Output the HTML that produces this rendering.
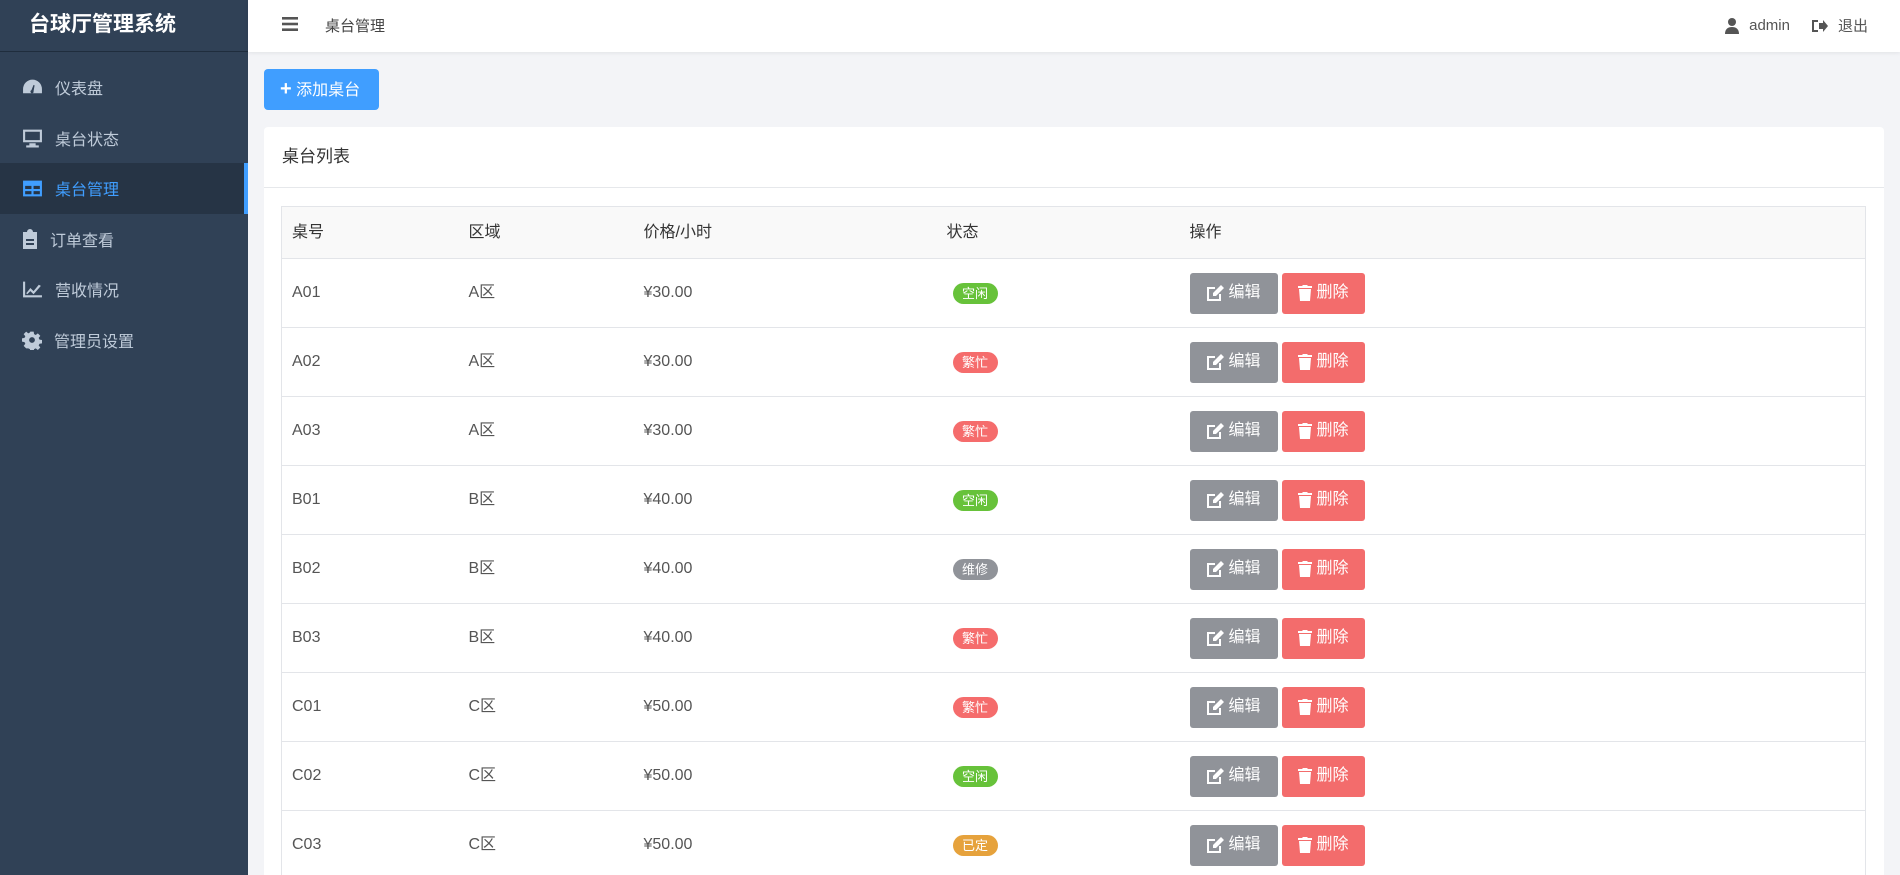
<!DOCTYPE html>
<html><head><meta charset="utf-8"><style>
*{box-sizing:border-box;margin:0;padding:0}
html{width:1900px;height:875px;overflow:hidden;background:#f3f4f7}
body{width:1900px;height:875px;overflow:hidden;font-family:"Liberation Sans","Noto Sans CJK SC",sans-serif;background:#f3f4f7;color:#333;position:relative}
.side{position:absolute;left:0;top:0;width:248px;height:875px;background:#304156}
.logo{height:52px;border-bottom:1px solid #1f2d3d;color:#fff;font-weight:bold;font-size:21px;line-height:50px;padding-left:29px}
.menu{margin-top:10px}
.mi{height:50.5px;display:flex;align-items:center;padding-left:22px;color:#bfcbd9;font-size:16px}
.mi svg{width:21px;height:20px;margin-right:12px;fill:#bfcbd9}
.mi.act{background:#263445;color:#409eff;border-right:4px solid #409eff}
.mi.act svg{fill:#409eff}
.top{position:absolute;left:248px;top:0;right:0;height:52px;background:#fff;box-shadow:0 1px 4px rgba(0,21,41,.08)}
.top .t{position:absolute;left:77px;top:15px;font-size:15px;color:#444}
.ham{position:absolute;left:34px;top:17px}
.tr{position:absolute;right:32px;top:15px;font-size:15px;color:#555;display:flex;align-items:center}
.btn{position:absolute;left:264px;top:69px;width:115px;height:41px;background:#409eff;border-radius:4px;color:#fff;font-size:16px;line-height:41px;padding-left:16px}
.card{position:absolute;left:264px;top:127px;width:1620px;height:760px;background:#fff;border-radius:4px}
.ch{height:61px;border-bottom:1px solid #e6e8eb;font-size:17px;line-height:60px;padding-left:18px}
table{position:absolute;left:17px;top:79px;width:1585px;border-collapse:collapse;font-size:16px;border-left:1px solid #e3e5e9;border-right:1px solid #e3e5e9}
td,th{border-top:1px solid #e3e5e9;text-align:left;font-weight:normal;padding-left:10px;vertical-align:middle;line-height:20px}
th{height:52px;background:#f9f9f9}
td{height:69px;color:#555}
.b{display:inline-block;width:45px;height:21px;border-radius:11px;color:#fff;font-size:13px;line-height:21px;text-align:center;margin-left:6px;vertical-align:middle}
.g{background:#67c23a}.r{background:#f56c6c}.y{background:#909399}.o{background:#e6a23c}
.e,.d{display:inline-flex;align-items:center;height:41px;border-radius:3px;color:#fff;font-size:16px;vertical-align:middle}
.e{width:88px;background:#909399;padding-left:17px}
.d{width:83px;background:#f36c6c;margin-left:4px;padding-left:16px}
.e svg,.d svg{margin-right:5px;fill:#fff}
</style></head><body>
<div class="side"><div class="logo">台球厅管理系统</div>
<div class="menu">
<div class="mi"><svg viewBox="0 0 20 18"><path d="M10 2A9 9 0 0 0 1 11v4h18v-4A9 9 0 0 0 10 2zm1 11a1.5 1.5 0 1 1-2-1l2-5 1 .5-1 5.5z"/></svg>仪表盘</div>
<div class="mi"><svg viewBox="0 0 20 18"><path d="M1 1h18v12H1zM3 3v8h14V3zM7 14h6v2h3v2H4v-2h3z"/></svg>桌台状态</div>
<div class="mi act"><svg viewBox="0 0 20 18"><path d="M1 2h18v15H1zM3 7v3h6V7zm8 0v3h6V7zM3 12v3h6v-3zm8 0v3h6v-3z"/></svg>桌台管理</div>
<div class="mi"><svg viewBox="0 0 16 20" style="width:16px;height:20px"><path d="M1 3h4a3 3 0 0 1 6 0h4v17H1zm3 7v2h8v-2zm0 4v2h8v-2z"/></svg>订单查看</div>
<div class="mi"><svg viewBox="0 0 20 18"><path d="M1 2h2v13h16v2H1zm3 11l4-5 3 3 5-6 2 1-7 8-3-3-3 3z"/></svg>营收情况</div>
<div class="mi"><svg viewBox="-2 -2 24 24" style="width:20px"><path d="M8 0h4l.5 3 2 1 2.5-2 3 3-2 2.5 1 2 3 .5v4l-3 .5-1 2 2 2.5-3 3-2.5-2-2 1-.5 3H8l-.5-3-2-1L3 20 0 17l2-2.5-1-2L-2 12V8l3-.5 1-2L0 3l3-3 2.5 2 2-1zm2 6.5a3.5 3.5 0 1 0 0 7 3.5 3.5 0 0 0 0-7z"/></svg>管理员设置</div>
</div></div>
<div class="top"><svg class="ham" width="16" height="14" viewBox="0 0 16 14" fill="#555"><rect y="0" width="16" height="2.6"/><rect y="5.7" width="16" height="2.6"/><rect y="11.4" width="16" height="2.6"/></svg><div class="t">桌台管理</div>
<div class="tr"><svg width="14" height="16" viewBox="0 0 14 16" fill="#555"><circle cx="7" cy="4" r="4"/><path d="M0 16c0-5 3-7 7-7s7 2 7 7z"/></svg><span style="margin:0 22px 0 10px">admin</span><svg width="16" height="14" viewBox="0 0 16 14" fill="#555"><path d="M0 1h6v2H2v8h4v2H0zM7 4h4V1l5 6-5 6v-3H7z"/></svg><span style="margin-left:10px">退出</span></div></div>
<div class="btn"><b style="font-size:20px">+</b> 添加桌台</div>
<div class="card"><div class="ch">桌台列表</div>
<table>
<tr><th style="width:177px">桌号</th><th style="width:175px">区域</th><th style="width:303px">价格/小时</th><th style="width:243px">状态</th><th>操作</th></tr>
<tr><td>A01</td><td>A区</td><td>¥30.00</td><td><span class="b g">空闲</span></td><td><span class="e"><svg width="17" height="16" viewBox="0 0 17 16"><path d="M0 2h8v2H2v10h10V9h2v7H0zM14 0l3 3-8 8H6V8z"/></svg>编辑</span><span class="d"><svg width="14" height="16" viewBox="0 0 14 16"><path d="M0 1h4l1-1h4l1 1h4v2H0zM1 4h12l-1 12H2z"/></svg>删除</span></td></tr>
<tr><td>A02</td><td>A区</td><td>¥30.00</td><td><span class="b r">繁忙</span></td><td><span class="e"><svg width="17" height="16" viewBox="0 0 17 16"><path d="M0 2h8v2H2v10h10V9h2v7H0zM14 0l3 3-8 8H6V8z"/></svg>编辑</span><span class="d"><svg width="14" height="16" viewBox="0 0 14 16"><path d="M0 1h4l1-1h4l1 1h4v2H0zM1 4h12l-1 12H2z"/></svg>删除</span></td></tr>
<tr><td>A03</td><td>A区</td><td>¥30.00</td><td><span class="b r">繁忙</span></td><td><span class="e"><svg width="17" height="16" viewBox="0 0 17 16"><path d="M0 2h8v2H2v10h10V9h2v7H0zM14 0l3 3-8 8H6V8z"/></svg>编辑</span><span class="d"><svg width="14" height="16" viewBox="0 0 14 16"><path d="M0 1h4l1-1h4l1 1h4v2H0zM1 4h12l-1 12H2z"/></svg>删除</span></td></tr>
<tr><td>B01</td><td>B区</td><td>¥40.00</td><td><span class="b g">空闲</span></td><td><span class="e"><svg width="17" height="16" viewBox="0 0 17 16"><path d="M0 2h8v2H2v10h10V9h2v7H0zM14 0l3 3-8 8H6V8z"/></svg>编辑</span><span class="d"><svg width="14" height="16" viewBox="0 0 14 16"><path d="M0 1h4l1-1h4l1 1h4v2H0zM1 4h12l-1 12H2z"/></svg>删除</span></td></tr>
<tr><td>B02</td><td>B区</td><td>¥40.00</td><td><span class="b y">维修</span></td><td><span class="e"><svg width="17" height="16" viewBox="0 0 17 16"><path d="M0 2h8v2H2v10h10V9h2v7H0zM14 0l3 3-8 8H6V8z"/></svg>编辑</span><span class="d"><svg width="14" height="16" viewBox="0 0 14 16"><path d="M0 1h4l1-1h4l1 1h4v2H0zM1 4h12l-1 12H2z"/></svg>删除</span></td></tr>
<tr><td>B03</td><td>B区</td><td>¥40.00</td><td><span class="b r">繁忙</span></td><td><span class="e"><svg width="17" height="16" viewBox="0 0 17 16"><path d="M0 2h8v2H2v10h10V9h2v7H0zM14 0l3 3-8 8H6V8z"/></svg>编辑</span><span class="d"><svg width="14" height="16" viewBox="0 0 14 16"><path d="M0 1h4l1-1h4l1 1h4v2H0zM1 4h12l-1 12H2z"/></svg>删除</span></td></tr>
<tr><td>C01</td><td>C区</td><td>¥50.00</td><td><span class="b r">繁忙</span></td><td><span class="e"><svg width="17" height="16" viewBox="0 0 17 16"><path d="M0 2h8v2H2v10h10V9h2v7H0zM14 0l3 3-8 8H6V8z"/></svg>编辑</span><span class="d"><svg width="14" height="16" viewBox="0 0 14 16"><path d="M0 1h4l1-1h4l1 1h4v2H0zM1 4h12l-1 12H2z"/></svg>删除</span></td></tr>
<tr><td>C02</td><td>C区</td><td>¥50.00</td><td><span class="b g">空闲</span></td><td><span class="e"><svg width="17" height="16" viewBox="0 0 17 16"><path d="M0 2h8v2H2v10h10V9h2v7H0zM14 0l3 3-8 8H6V8z"/></svg>编辑</span><span class="d"><svg width="14" height="16" viewBox="0 0 14 16"><path d="M0 1h4l1-1h4l1 1h4v2H0zM1 4h12l-1 12H2z"/></svg>删除</span></td></tr>
<tr><td>C03</td><td>C区</td><td>¥50.00</td><td><span class="b o">已定</span></td><td><span class="e"><svg width="17" height="16" viewBox="0 0 17 16"><path d="M0 2h8v2H2v10h10V9h2v7H0zM14 0l3 3-8 8H6V8z"/></svg>编辑</span><span class="d"><svg width="14" height="16" viewBox="0 0 14 16"><path d="M0 1h4l1-1h4l1 1h4v2H0zM1 4h12l-1 12H2z"/></svg>删除</span></td></tr>
</table></div>
</body></html>
